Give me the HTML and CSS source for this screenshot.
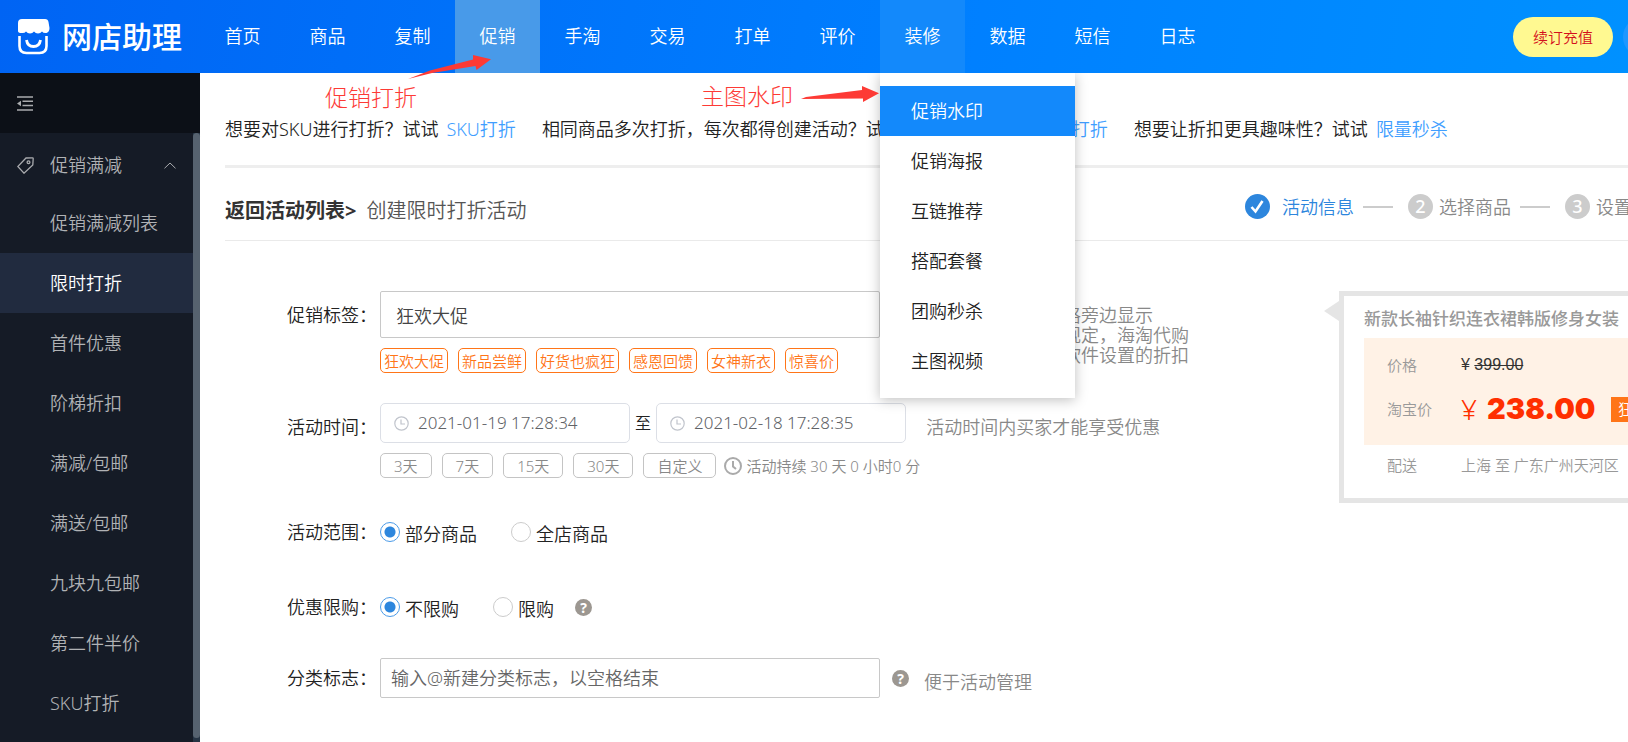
FILE: index.html
```html
<!DOCTYPE html>
<html lang="zh-CN">
<head>
<meta charset="utf-8">
<title>网店助理</title>
<link rel="stylesheet" href="styles.css">
</head>
<body>
<header class="header">
  <a class="logo" href="#">
    <svg class="logo-icon" width="32" height="36" viewBox="0 0 32 36" fill="none" aria-hidden="true">
      <path d="M4 0h23q3 0 3.500 3l1 6q0 4-3 5-3 .5-4.500-1.500-1.500 2-4 2t-4-2q-1.500 2-4 2t-4-2q-1.500 2-4.500 1.500Q0 14 0 12V4q0-4 4-4z" fill="#fff"/>
      <path d="M1.500 17v10q0 7 7 7h13q7 0 7-7V17" stroke="#fff" stroke-width="2.600"/>
      <path d="M8.500 21q1 6.500 7 6.500t7-6.500" stroke="#fff" stroke-width="2.800"/>
    </svg>
    <span class="logo-text">网店助理</span>
  </a>
  <nav class="nav">
    <a class="nav-item" href="#">首页</a>
    <a class="nav-item" href="#">商品</a>
    <a class="nav-item" href="#">复制</a>
    <a class="nav-item nav-current" href="#">促销</a>
    <a class="nav-item" href="#">手淘</a>
    <a class="nav-item" href="#">交易</a>
    <a class="nav-item" href="#">打单</a>
    <a class="nav-item" href="#">评价</a>
    <div class="nav-group">
      <a class="nav-item nav-open" href="#">装修</a>
      <div class="dropdown">
        <a class="drop-item drop-active" href="#">促销水印</a>
        <a class="drop-item" href="#">促销海报</a>
        <a class="drop-item" href="#">互链推荐</a>
        <a class="drop-item" href="#">搭配套餐</a>
        <a class="drop-item" href="#">团购秒杀</a>
        <a class="drop-item" href="#">主图视频</a>
      </div>
    </div>
    <a class="nav-item" href="#">数据</a>
    <a class="nav-item" href="#">短信</a>
    <a class="nav-item" href="#">日志</a>
  </nav>
  <div class="account">
    <button class="renew" type="button">续订充值</button>
    <span class="avatar"></span>
  </div>
</header>

<div class="page">
  <aside class="sidebar">
    <button class="fold" type="button" aria-label="收起菜单">
      <svg width="16" height="15" viewBox="0 0 16 15" aria-hidden="true"><path d="M0 1h16M5.500 5.300h10.500M5.500 9.600h10.500M0 14h16" stroke="#a9abae" stroke-width="1.500"/><path d="M0 7.500l4-2.800v5.600z" fill="#a9abae"/></svg>
    </button>
    <div class="side-body">
      <nav class="side-menu">
        <a class="side-title" href="#">
          <svg width="17" height="17" viewBox="0 0 17 17" fill="none" stroke="#a9abae" stroke-width="1.300" aria-hidden="true"><path d="M9 1l6.500-.2q.7 0 .7.700L15.800 8 7 16.200.8 9.500z"/><circle cx="11.500" cy="5.300" r="1.400"/></svg>
          <span>促销满减</span>
          <svg class="caret" width="12" height="7" viewBox="0 0 12 7" fill="none" stroke="#a9abae" aria-hidden="true"><path d="M.5 6.300L6 1l5.500 5.300"/></svg>
        </a>
        <a class="side-item" href="#">促销满减列表</a>
        <a class="side-item side-active" href="#">限时打折</a>
        <a class="side-item" href="#">首件优惠</a>
        <a class="side-item" href="#">阶梯折扣</a>
        <a class="side-item" href="#">满减/包邮</a>
        <a class="side-item" href="#">满送/包邮</a>
        <a class="side-item" href="#">九块九包邮</a>
        <a class="side-item" href="#">第二件半价</a>
        <a class="side-item" href="#">SKU打折</a>
      </nav>
      <div class="scrollbar"><div class="thumb"></div></div>
    </div>
  </aside>

  <main class="main">
    <div class="tips">
      <p class="tip">想要对SKU进行打折&#xff1f;试试<a href="#">SKU打折</a></p>
      <p class="tip">相同商品多次打折&#xff0c;每次都得创建活动&#xff1f;试试<a href="#">按周期循环自动创建打折</a></p>
      <p class="tip">想要让折扣更具趣味性&#xff1f;试试<a href="#">限量秒杀</a></p>
    </div>

    <div class="title-row">
      <h1 class="title"><a href="#">返回活动列表&gt;</a><span>创建限时打折活动</span></h1>
      <ol class="steps">
        <li class="step step-on">
          <svg width="25" height="25" viewBox="0 0 25 25" aria-hidden="true"><circle cx="12.500" cy="12.500" r="12.500" fill="#2d86dd"/><path d="M6.500 13l4 4.500L17.500 7" fill="none" stroke="#fff" stroke-width="2.600"/></svg>
          <span>活动信息</span>
        </li>
        <li class="step"><b>2</b><span>选择商品</span></li>
        <li class="step"><b>3</b><span>设置折扣</span></li>
      </ol>
    </div>

    <div class="content">
      <form class="form">
        <div class="row">
          <label class="label label-tag" for="tag">促销标签&#xff1a;</label>
          <div class="field">
            <input class="text-input tag-input" id="tag" type="text" value="狂欢大促">
            <div class="chips">
              <button class="chip" type="button">狂欢大促</button>
              <button class="chip" type="button">新品尝鲜</button>
              <button class="chip" type="button">好货也疯狂</button>
              <button class="chip" type="button">感恩回馈</button>
              <button class="chip" type="button">女神新衣</button>
              <button class="chip" type="button">惊喜价</button>
            </div>
          </div>
          <p class="note note-tag">促销标签在商品价格旁边显示<br>按照淘宝平台最新规定&#xff0c;海淘代购<br>商品不能享受本类软件设置的折扣</p>
        </div>

        <div class="row row-time">
          <label class="label label-time" for="start">活动时间&#xff1a;</label>
          <div class="field">
            <div class="dates">
              <div class="date">
                <svg width="15" height="15" viewBox="0 0 15 15" fill="none" stroke="#c0c4cc" stroke-width="1.200" aria-hidden="true"><circle cx="7.500" cy="7.500" r="6.700"/><path d="M7 3.500V8h4"/></svg>
                <input id="start" type="text" value="2021-01-19 17:28:34">
              </div>
              <label for="end">至</label>
              <div class="date">
                <svg width="15" height="15" viewBox="0 0 15 15" fill="none" stroke="#c0c4cc" stroke-width="1.200" aria-hidden="true"><circle cx="7.500" cy="7.500" r="6.700"/><path d="M7 3.500V8h4"/></svg>
                <input id="end" type="text" value="2021-02-18 17:28:35">
              </div>
            </div>
            <div class="chips">
              <button class="chip chip-gray" type="button">3天</button>
              <button class="chip chip-gray" type="button">7天</button>
              <button class="chip chip-gray" type="button">15天</button>
              <button class="chip chip-gray" type="button">30天</button>
              <button class="chip chip-gray" type="button">自定义</button>
              <span class="lasting">
                <svg width="18" height="18" viewBox="0 0 18 18" fill="none" stroke="#aaa" stroke-width="2" aria-hidden="true"><circle cx="9" cy="9" r="8"/><path d="M9 4v5.500l3 2.500"/></svg>
                活动持续 30 天 0 小时0 分
              </span>
            </div>
          </div>
          <p class="note note-time">活动时间内买家才能享受优惠</p>
        </div>

        <div class="row row-scope" role="radiogroup" aria-labelledby="scope">
          <span class="label" id="scope">活动范围&#xff1a;</span>
          <label class="radio"><input type="radio" name="scope" checked><span>部分商品</span></label>
          <label class="radio"><input type="radio" name="scope"><span>全店商品</span></label>
        </div>

        <div class="row row-limit" role="radiogroup" aria-labelledby="limit">
          <span class="label" id="limit">优惠限购&#xff1a;</span>
          <label class="radio"><input type="radio" name="limit" checked><span>不限购</span></label>
          <label class="radio"><input type="radio" name="limit"><span>限购</span></label>
          <span class="help help-limit">?</span>
        </div>

        <div class="row row-mark">
          <label class="label" for="mark">分类标志&#xff1a;</label>
          <input class="text-input mark-input" id="mark" type="text" placeholder="输入@新建分类标志&#xff0c;以空格结束">
          <span class="help">?</span>
          <p class="note note-mark">便于活动管理</p>
        </div>
      </form>

      <section class="preview">
        <svg class="pointer" width="15" height="20" viewBox="0 0 15 20" aria-hidden="true"><path d="M15 0v20L0 10z" fill="#e5e5e5"/></svg>
        <div class="card">
          <h2 class="card-title">新款长袖针织连衣裙韩版修身女装</h2>
          <div class="prices">
            <div class="line"><span class="key">价格</span><span class="old">¥ <s>399.00</s></span></div>
            <div class="line"><span class="key">淘宝价</span><span class="now"><i>¥</i><b>238.00</b></span><span class="badge">狂欢大促</span></div>
          </div>
          <div class="line ship"><span class="key">配送</span><span>上海 至 广东广州天河区</span></div>
        </div>
      </section>
    </div>
  </main>
</div>

<div class="marks">
  <svg class="arrows" width="480" height="50" viewBox="405 53 480 50" aria-hidden="true">
    <path d="M408 79L430 70.500 473 59.500V55L491 59.300 476.500 70 475.500 66 432 73z" fill="#fd3a35"/>
    <path d="M801 99L806 97 862 90V86L879 93.300 863 102V98.500z" fill="#fd3a35"/>
  </svg>
  <span class="mark mark-promo">促销打折</span>
  <span class="mark mark-water">主图水印</span>
</div>
</body>
</html>
```

FILE: styles.css
```css
* { box-sizing: border-box; }
body {
  margin: 0;
  min-height: 100vh;
  display: flex;
  flex-direction: column;
  overflow: hidden;
  background: #fff;
  color: #222;
  font: 350 18px/24px "Noto Sans", "Noto Sans CJK SC", sans-serif;
}
a { color: inherit; text-decoration: none; }
button, input { font: inherit; color: inherit; margin: 0; }
button { cursor: pointer; }
p, h1, h2, ol { margin: 0; padding: 0; }
svg { flex: none; display: block; }

.header {
  display: flex;
  height: 73px;
  background: linear-gradient(100deg, #0064f4 0%, #0080ff 60%, #0091ff 100%);
  color: #fff;
}
.logo {
  flex: none;
  width: 200px;
  padding-left: 18px;
  display: flex;
  align-items: center;
  gap: 12px;
}
.logo-text { font-size: 30px; line-height: 40px; font-weight: 500; }
.nav { display: flex; flex: none; }
.nav-item {
  display: block;
  width: 85px;
  line-height: 72px;
  height: 73px;
  text-align: center;
}
.nav-current { background: #489ae9; }
.nav-open { background: #1389fb; }
.nav-group { position: relative; }
.dropdown {
  position: absolute;
  z-index: 5;
  top: 73px;
  left: 0;
  width: 195px;
  padding: 13px 0 12px;
  background: #fff;
  color: #222;
  box-shadow: 0 2px 12px rgba(0, 0, 0, .25);
  clip-path: inset(0 -20px -20px -20px);
}
.drop-item { display: block; padding-left: 31px; line-height: 50px; }
.drop-active { background: #1389fb; color: #fff; }
.account {
  flex: 0 0 115px;
  margin-left: auto;
  display: flex;
  align-items: center;
  gap: 10px;
  overflow: hidden;
}
.renew {
  flex: none;
  width: 100px;
  height: 40px;
  padding: 0;
  border: 0;
  border-radius: 20px;
  background: #fff991;
  color: #d4101c;
  font-size: 15px;
}
.avatar { flex: none; width: 40px; height: 40px; border-radius: 20px; background: #1d97ff; }

.page { flex: 1; display: flex; min-height: 0; }
.sidebar {
  flex: 0 0 200px;
  display: flex;
  flex-direction: column;
  background: #151b26;
  color: #b0b2b5;
}
.fold {
  display: flex;
  align-items: center;
  height: 60px;
  padding: 0 17px;
  border: 0;
  background: #0c1017;
}
.side-body { flex: 1; display: flex; min-height: 0; }
.side-menu { flex: 1; overflow: hidden; }
.side-title { display: flex; align-items: center; height: 60px; padding: 4px 17px 0; gap: 16px; }
.caret { margin-left: auto; }
.side-item { display: block; padding-left: 50px; line-height: 60px; }
.side-active { background: #212b3f; color: #fff; }
.scrollbar { flex: 0 0 7px; padding-bottom: 4px; background: #263444; }
.thumb { height: 100%; border-radius: 4px; background: #56626f; }

.main { flex: 1; min-width: 0; padding-left: 25px; overflow: hidden; }
.tips {
  display: flex;
  gap: 26px;
  height: 95px;
  padding-top: 44px;
  border-bottom: 3px solid #eee;
  white-space: nowrap;
}
.tip a { margin-left: 8px; color: #409eff; }
.title-row {
  display: flex;
  align-items: center;
  height: 73px;
  padding-top: 5px;
  border-bottom: 1px solid #eaeaea;
  white-space: nowrap;
}
.title { display: flex; gap: 10px; padding-top: 8px; font-size: 20px; font-weight: 350; color: #555; }
.title a { font-weight: 700; color: #333; }
.steps {
  flex: 0 0 383px;
  display: flex;
  align-items: center;
  margin-left: auto;
  overflow: hidden;
  list-style: none;
  color: #888;
}
.step { display: flex; align-items: center; flex: none; gap: 6px; }
.step + .step::before { content: ""; width: 30px; height: 2px; margin: 0 9px; background: #ccc; }
.step b {
  width: 25px;
  height: 25px;
  border-radius: 50%;
  background: #ccc;
  color: #fff;
  font-weight: 500;
  text-align: center;
}
.step-on { gap: 12px; color: #2d86dd; }

.content { display: flex; padding-top: 50px; }
.form { flex: 1; min-width: 0; padding-left: 62px; }
.row { display: flex; align-items: flex-start; white-space: nowrap; }
.label { flex: none; width: 93px; }
.label-tag, .label-time { padding-top: 12px; }
.text-input {
  display: block;
  width: 500px;
  border: 1px solid #c8c8c8;
  border-radius: 2px;
  background: #fff;
}
.tag-input { height: 47px; padding: 0 15px; color: #444; }
.mark-input { height: 40px; padding: 0 10px; }
.mark-input::placeholder { color: #666; opacity: 1; }
.chips { display: flex; gap: 10px; margin-top: 10px; }
.chip {
  height: 25px;
  padding: 0 3px;
  border: 1px solid #ff7518;
  border-radius: 5px;
  background: #fff;
  color: #ff7518;
  font-size: 15px;
  line-height: 22px;
}
.chip-gray { padding: 0 13px; border-color: #c4c4c4; color: #888; }
.note { color: #888; }
.note-tag { margin-left: 39px; padding-top: 14px; line-height: 20px; }
.note-time { margin-left: 6px; padding-top: 12px; }
.note-mark { margin-left: 15px; padding-top: 8px; }
.row-time { margin-top: 30px; }
.dates { display: flex; align-items: center; gap: 5px; font-size: 16px; }
.date {
  display: flex;
  align-items: center;
  gap: 9px;
  width: 250px;
  height: 40px;
  padding: 0 13px;
  border: 1px solid #dcdfe6;
  border-radius: 5px;
  font-size: 17px;
}
.date input { flex: 1; min-width: 0; padding: 0; border: 0; background: none; color: #606266; }
.lasting { display: flex; align-items: center; gap: 4px; margin-left: -2px; color: #888; font-size: 15px; }
.row-scope { align-items: center; height: 40px; margin-top: 34px; }
.row-limit { align-items: center; height: 40px; margin-top: 35px; }
.row-mark { align-items: center; height: 40px; margin-top: 31px; }
.radio { display: flex; align-items: center; gap: 5px; margin-right: 34px; }
.radio span { padding-top: 3px; }
.radio input {
  appearance: none;
  width: 20px;
  height: 20px;
  border: 1px solid #ccc;
  border-radius: 50%;
  background: #fff;
}
.radio input:checked {
  border: 1px solid #4b9be8;
  background: radial-gradient(circle, #2d86dd 5px, #fff 6px);
}
.help {
  width: 17px;
  height: 17px;
  margin-left: 12px;
  border-radius: 50%;
  background: #9c9791;
  color: #fff;
  font-size: 14px;
  font-weight: 700;
  line-height: 17px;
  text-align: center;
}
.help-limit { margin-left: -13px; }

.preview { flex: 0 0 304px; display: flex; overflow: hidden; color: #999; font-size: 15px; }
.pointer { margin-top: 10px; }
.card {
  flex: none;
  width: 420px;
  height: 212px;
  padding: 11px 0 0 20px;
  border: 5px solid #e5e5e5;
  white-space: nowrap;
}
.card-title { margin-bottom: 7px; font-size: 17px; line-height: 24px; font-weight: 500; }
.prices { height: 107px; padding-top: 5px; background: #fff2e6; }
.line { display: flex; align-items: center; height: 44px; padding-left: 23px; }
.key { flex: none; width: 74px; }
.old { color: #333; font-family: "Liberation Sans", sans-serif; font-size: 16px; }
.now { display: flex; align-items: center; color: #ff2f00; line-height: 32px; }
.now i { width: 26px; font-size: 28px; font-style: normal; }
.now b { width: 124px; font-family: Inter, sans-serif; font-size: 29px; font-weight: 900; }
.badge { padding: 0 7px; line-height: 25px; background: #ff7518; color: #fff; }
.ship { height: 39px; }

.marks { color: #fd3a35; font-size: 23px; font-weight: 300; line-height: 28px; white-space: nowrap; }
.arrows { position: absolute; z-index: 6; left: 405px; top: 53px; }
.mark { position: absolute; z-index: 6; }
.mark-promo { left: 325px; top: 83px; }
.mark-water { left: 701px; top: 82px; }
```
